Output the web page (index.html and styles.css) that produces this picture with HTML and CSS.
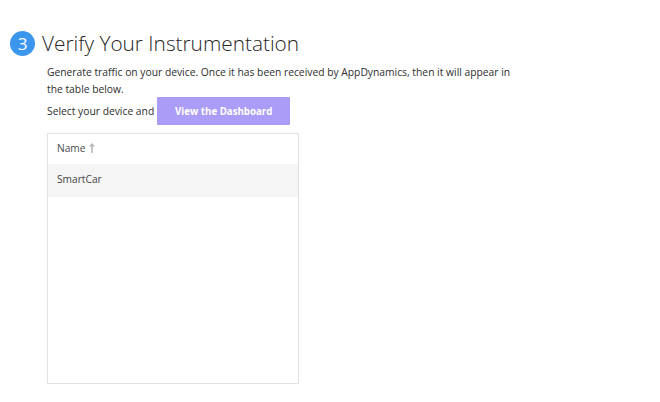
FILE: index.html
```html
<!DOCTYPE html>
<html>
<head>
<meta charset="utf-8">
<link rel="stylesheet" href="styles.css">
</head>
<body>
<div class="page">
  <div class="step-head">
    <span class="step-num">3</span>
    <h1 class="step-title">Verify Your Instrumentation</h1>
  </div>
  <div class="step-body">
    <p class="desc">Generate traffic on your device. Once it has been received by AppDynamics, then it will appear in the table below.</p>
    <div class="select-line">
      <span>Select your device and</span>
      <button class="btn">View the Dashboard</button>
    </div>
    <div class="table">
      <div class="th">Name <svg class="sort" width="6" height="10" viewBox="0 0 6 10"><path d="M3 0 L6 3.5 L3.8 3.5 L3.8 10 L2.2 10 L2.2 3.5 L0 3.5 Z" fill="#b8b8b8"/></svg></div>
      <div class="tr">SmartCar</div>
    </div>
  </div>
</div>
</body>
</html>
```
FILE: styles.css
```css
* { box-sizing: border-box; }
body {
  margin: 0;
  background: #fff;
  font-family: "Open Sans", "Liberation Sans", sans-serif;
  color: #333;
}
.page {
  padding: 31px 0 0 10px;
}
.step-head {
  display: flex;
  align-items: center;
  gap: 7px;
}
.step-num {
  width: 25px;
  height: 25px;
  border-radius: 50%;
  background: #3b97ee;
  color: #fff;
  font-size: 17px;
  font-weight: 400;
  line-height: 1;
  display: flex;
  align-items: center;
  justify-content: center;
}
.step-title {
  margin: 0;
  font-size: 20.8px;
  font-weight: 300;
  color: #262626;
  line-height: 25px;
}
.step-body {
  padding-left: 37px;
  margin-top: 7.5px;
}
.desc {
  margin: 0;
  font-size: 10.3px;
  line-height: 17.3px;
  width: 475px;
  color: #2e2e2e;
}
.select-line {
  display: flex;
  align-items: center;
  gap: 3px;
  font-size: 10.3px;
  margin-top: -1px;
  color: #2e2e2e;
}
.btn {
  border: 0;
  border-radius: 1px;
  background: #ab9cf8;
  color: #fff;
  font-family: inherit;
  font-size: 9.7px;
  font-weight: 700;
  width: 133px;
  height: 28px;
  padding: 0;
}
.table {
  margin-top: 8px;
  width: 252px;
  height: 251px;
  border: 1px solid #e3e3e3;
  box-shadow: 0 0 2px rgba(0,0,0,0.06);
}
.th {
  height: 30px;
  padding-left: 9px;
  padding-bottom: 2px;
  display: flex;
  align-items: center;
  gap: 4px;
  font-size: 10.2px;
  color: #4a4a4a;
}
.sort { display: block; margin-top: -1px; }
.tr {
  height: 33px;
  padding-left: 9px;
  padding-bottom: 3px;
  display: flex;
  align-items: center;
  background: #f5f5f5;
  font-size: 10.2px;
  color: #444;
}
```
